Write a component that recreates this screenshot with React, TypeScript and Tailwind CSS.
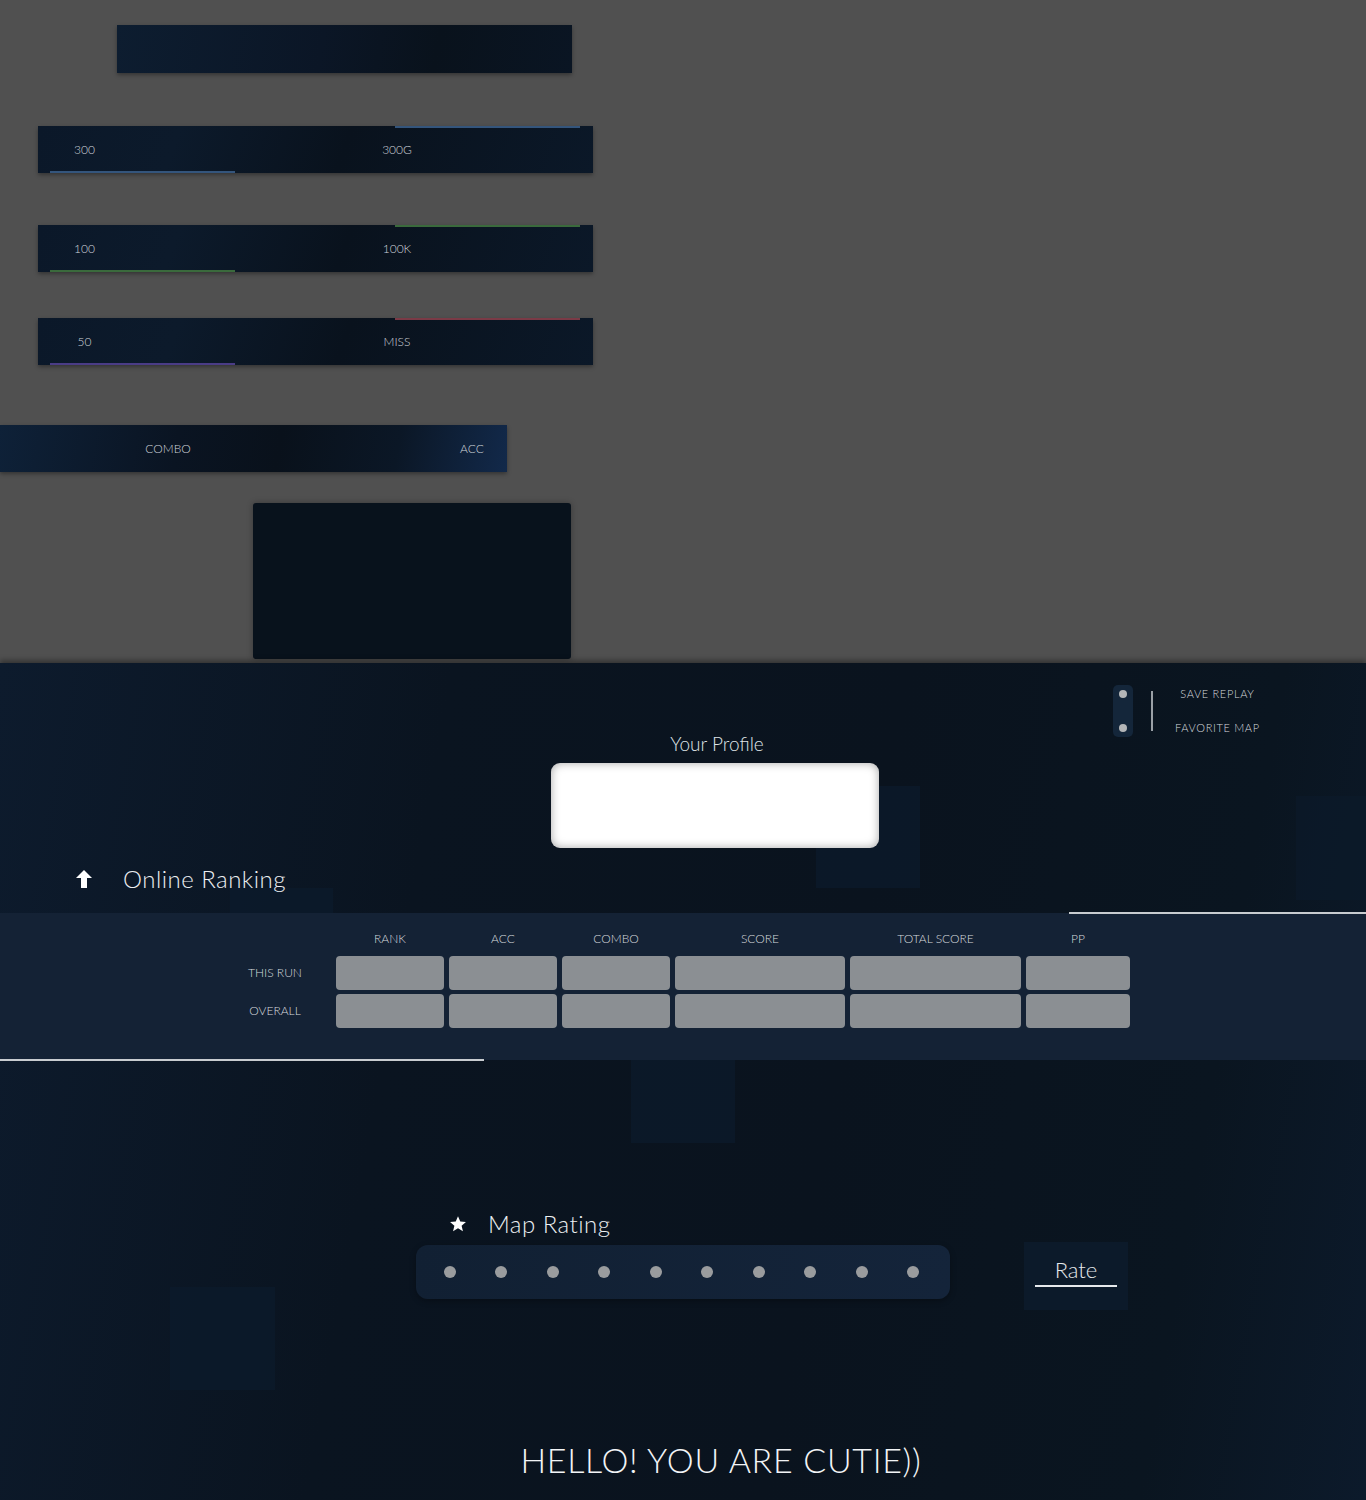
import React from 'react';

const font = "font-['Lato','Noto_Sans',sans-serif]";

type Judge = {
  left: string;
  right: string;
  lineColor: string;
};

const judges: Judge[] = [
  { left: '300', right: '300G', lineColor: 'bg-[#34557c]' },
  { left: '100', right: '100K', lineColor: 'bg-[#3a6a3c]' },
  { left: '50', right: 'MISS', lineColor: 'bg-[#4a3c86]' },
];

const topLineColors = ['bg-[#34557c]', 'bg-[#3a6a3c]', 'bg-[#7a3a46]'];

const columns = [
  { label: 'RANK', w: 'w-[108px]' },
  { label: 'ACC', w: 'w-[108px]' },
  { label: 'COMBO', w: 'w-[108px]' },
  { label: 'SCORE', w: 'w-[170px]' },
  { label: 'TOTAL SCORE', w: 'w-[171px]' },
  { label: 'PP', w: 'w-[104px]' },
];

const JudgeRow: React.FC<{ judge: Judge; top: string; idx: number }> = ({ judge, top, idx }) => (
  <div
    className={`relative ml-[38px] flex h-[47px] w-[555px] items-center bg-[linear-gradient(110deg,#0b1829_0%,#0c1a2b_25%,#09121d_55%,#0b1828_100%)] shadow-[0_2px_4px_rgba(0,0,0,0.35)] ${
      idx === 0 ? 'mt-[53px]' : idx === 1 ? 'mt-[52px]' : 'mt-[46px]'
    }`}
  >
    {/* accent lines */}
    <div className={`absolute left-[12px] bottom-0 h-[2px] w-[185px] ${judge.lineColor}`} />
    <div className={`absolute left-[357px] top-0 h-[2px] w-[185px] ${top}`} />
    <div className="w-[93px] text-center text-[12px] text-[#cfd4da]">{judge.left}</div>
    <div className="ml-[226px] w-[80px] text-center text-[12px] text-[#cfd4da]">{judge.right}</div>
  </div>
);

const ArrowUp = () => (
  <svg width="16" height="18" viewBox="0 0 16 18" fill="#ffffff">
    <polygon points="8,0 16,8 11,8 11,18 5,18 5,8 0,8" />
  </svg>
);

const Star = () => (
  <svg width="18" height="18" viewBox="0 0 24 24" fill="#ffffff">
    <polygon points="12,1.5 15,8.6 22.6,9.2 16.8,14.2 18.6,21.6 12,17.6 5.4,21.6 7.2,14.2 1.4,9.2 9,8.6" />
  </svg>
);

const App: React.FC = () => {
  return (
    <div className={`${font} w-[1366px] font-light`}>
      {/* 上半部分：判定条 */}
      <div className="flex h-[663px] flex-col bg-[#505050]">
        <div className="ml-[117px] mt-[25px] h-[48px] w-[455px] bg-[linear-gradient(100deg,#0d1d30_0%,#0b1626_45%,#09121c_70%,#0a1523_100%)] shadow-[0_2px_4px_rgba(0,0,0,0.35)]" />

        {judges.map((j, i) => (
          <JudgeRow key={j.left} judge={j} top={topLineColors[i]} idx={i} />
        ))}

        <div className="mt-[60px] flex h-[47px] w-[507px] items-center bg-[linear-gradient(100deg,#0e2138_0%,#0a1422_35%,#09111b_55%,#0b1726_78%,#12294a_100%)] shadow-[0_2px_4px_rgba(0,0,0,0.35)]">
          <div className="ml-[126px] w-[84px] text-center text-[12px] text-[#cfd4da]">COMBO</div>
          <div className="ml-[238px] w-[48px] text-center text-[12px] text-[#cfd4da]">ACC</div>
        </div>

        <div className="ml-[253px] mt-[31px] h-[156px] w-[318px] rounded-[3px] bg-[#08121c] shadow-[0_0_6px_rgba(0,0,0,0.3)]" />
      </div>

      {/* 下半部分：结果面板 */}
      <div className="relative h-[837px] overflow-hidden bg-[linear-gradient(100deg,#0d1b2d_0%,#0a1420_30%,#0a131e_60%,#0a1520_85%,#0c1a2b_100%)] shadow-[0_-3px_5px_rgba(0,0,0,0.35)]">
        {/* 装饰方块 */}
        <div className="absolute left-[816px] top-[123px] h-[102px] w-[104px] bg-[#0c1b2c]/70" />
        <div className="absolute left-[230px] top-[225px] h-[100px] w-[103px] bg-[#0c1b2c]/70" />
        <div className="absolute left-[1296px] top-[133px] h-[104px] w-[104px] bg-[#0c1b2c]/60" />
        <div className="absolute left-[631px] top-[376px] h-[104px] w-[104px] bg-[#0c1b2c]/70" />
        <div className="absolute left-[170px] top-[624px] h-[103px] w-[105px] bg-[#0c1b2c]/70" />

        {/* 右上角选项 */}
        <div className="absolute left-[1113px] top-[22px] flex items-center">
          <div className="flex h-[52px] w-[20px] flex-col items-center justify-between rounded-[5px] bg-[#14263a] py-[5px]">
            <div className="h-[8px] w-[8px] rounded-full bg-[#b4b6b8]" />
            <div className="h-[8px] w-[8px] rounded-full bg-[#b4b6b8]" />
          </div>
          <div className="ml-[18px] h-[40px] w-[2px] bg-[#9aa0a6]" />
          <div className="ml-[22px] flex flex-col items-center gap-[18px] text-[11px] tracking-[0.06em] text-[#d6dade]">
            <div className="leading-[16px]">SAVE REPLAY</div>
            <div className="leading-[16px]">FAVORITE MAP</div>
          </div>
        </div>

        <div className="relative flex flex-col">
          {/* 个人资料 */}
          <div className="ml-[551px] mt-[70px] flex w-[328px] flex-col items-center">
            <div className="ml-[4px] text-[19px] leading-[22px] text-[#dfe3e7]">Your Profile</div>
            <div className="mt-[8px] h-[85px] w-[328px] rounded-[9px] bg-white shadow-[inset_0_0_10px_rgba(0,0,0,0.35)]" />
          </div>

          {/* 在线排名 */}
          <div className="ml-[76px] mt-[15px] flex h-[32px] items-center">
            <ArrowUp />
            <div className="ml-[31px] text-[24px] leading-[32px] tracking-[0.02em] text-[#eceff2]">Online Ranking</div>
          </div>

          <div className="relative mt-[18px] h-[147px] bg-[#142235]">
            <div className="absolute right-0 top-[-1px] h-[2px] w-[297px] bg-[#c8ccd0]" />
            <div className="absolute bottom-[-1px] left-0 h-[2px] w-[484px] bg-[#c8ccd0]" />

            <div className="flex pt-[18px]">
              <div className="flex w-[336px] flex-col items-end pr-[6px]">
                <div className="h-[16px]" />
                <div className="mt-[9px] flex h-[34px] w-[110px] items-center justify-center text-[12px] text-[#d6dade]">THIS RUN</div>
                <div className="mt-[4px] flex h-[34px] w-[110px] items-center justify-center text-[12px] text-[#d6dade]">OVERALL</div>
              </div>
              <div className="flex gap-[5px]">
                {columns.map((c) => (
                  <div key={c.label} className={`flex flex-col ${c.w}`}>
                    <div className="h-[16px] text-center text-[12px] leading-[16px] text-[#d6dade]">{c.label}</div>
                    <div className="mt-[9px] h-[34px] rounded-[4px] bg-[#8b8f93]" />
                    <div className="mt-[4px] h-[34px] rounded-[4px] bg-[#8b8f93]" />
                  </div>
                ))}
              </div>
            </div>
          </div>

          {/* 谱面评分 */}
          <div className="ml-[416px] mt-[148px] flex flex-col">
            <div className="flex h-[32px] items-center pl-[33px]">
              <Star />
              <div className="ml-[21px] text-[24px] leading-[32px] tracking-[0.02em] text-[#eceff2]">Map Rating</div>
            </div>
            <div className="mt-[5px] flex items-start">
              <div className="flex h-[54px] w-[534px] items-center justify-between rounded-[12px] bg-[linear-gradient(100deg,#112033,#14243a)] pl-[28px] pr-[31px] shadow-[0_2px_6px_rgba(0,0,0,0.3)]">
                {Array.from({ length: 10 }).map((_, i) => (
                  <div key={i} className="h-[12px] w-[12px] rounded-full bg-[#9a9c9e]" />
                ))}
              </div>
              <div className="ml-[74px] mt-[-3px] flex h-[68px] w-[104px] flex-col items-center justify-center bg-[#0c1a2a] pb-[8px]">
                <div className="text-[22px] leading-[26px] text-[#e6e9ec]">Rate</div>
                <div className="mt-[2px] h-[2px] w-[82px] bg-[#e6e9ec]" />
              </div>
            </div>
          </div>

          {/* 底部文字 */}
          <div className="mt-[128px] pl-[76px] text-center text-[34px] font-light leading-[44px] tracking-[0.02em] text-[#f2f4f6]">
            HELLO! YOU ARE CUTIE))
          </div>
        </div>
      </div>
    </div>
  );
};

export default App;
